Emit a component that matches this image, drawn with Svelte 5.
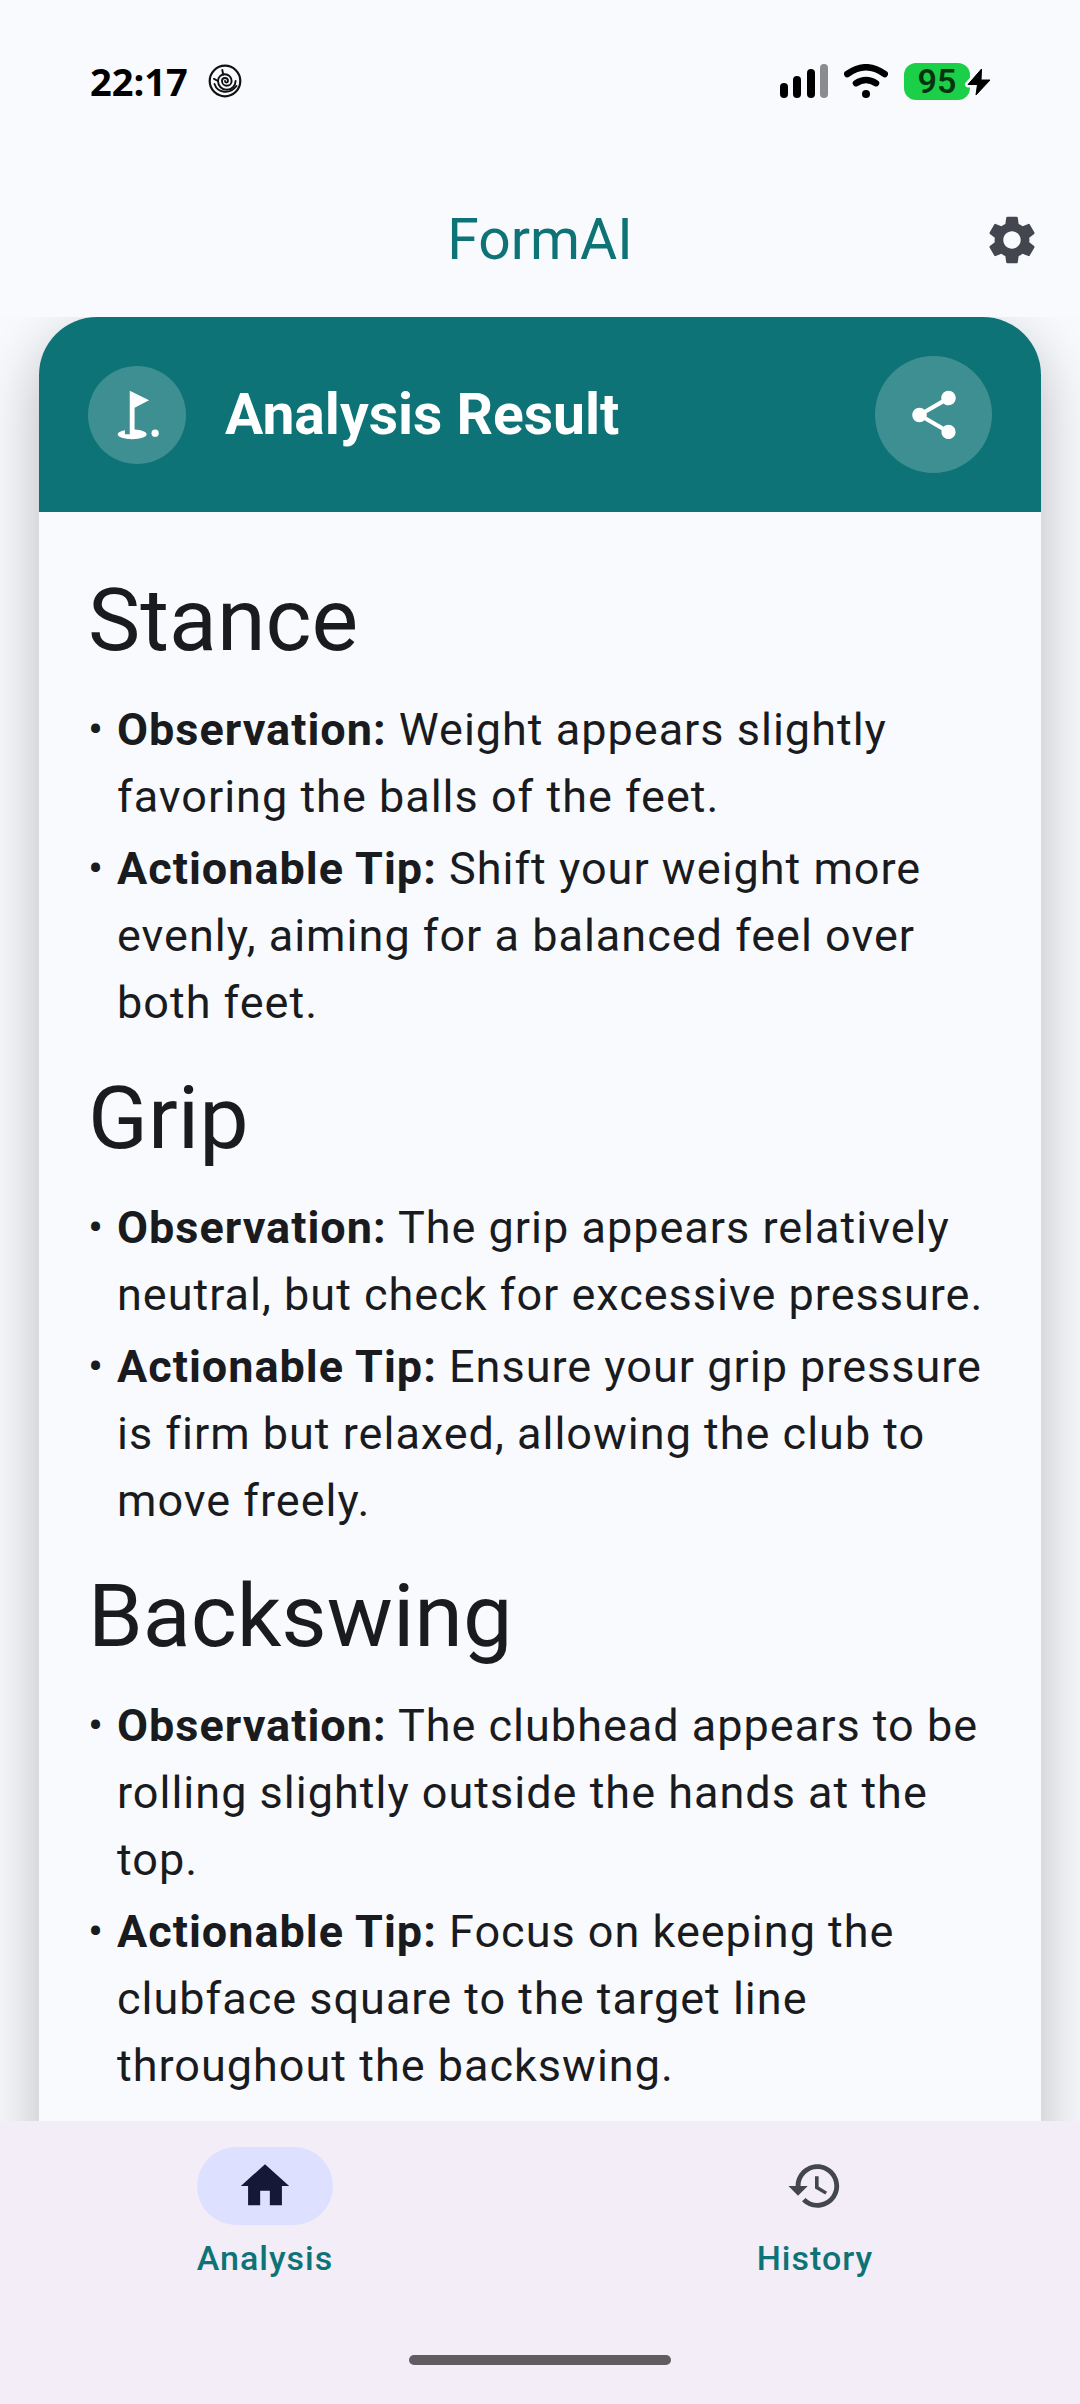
<script lang="ts">
  type Point = { label: string; text: string };
  type Section = { title: string; points: Point[] };

  const sections: Section[] = [
    {
      title: "Stance",
      points: [
        {
          label: "Observation:",
          text: "Weight appears slightly favoring the balls of the feet.",
        },
        {
          label: "Actionable Tip:",
          text: "Shift your weight more evenly, aiming for a balanced feel over both feet.",
        },
      ],
    },
    {
      title: "Grip",
      points: [
        {
          label: "Observation:",
          text: "The grip appears relatively neutral, but check for excessive pressure.",
        },
        {
          label: "Actionable Tip:",
          text: "Ensure your grip pressure is firm but relaxed, allowing the club to move freely.",
        },
      ],
    },
    {
      title: "Backswing",
      points: [
        {
          label: "Observation:",
          text: "The clubhead appears to be rolling slightly outside the hands at the top.",
        },
        {
          label: "Actionable Tip:",
          text: "Focus on keeping the clubface square to the target line throughout the backswing.",
        },
      ],
    },
  ];

  const tabs = [
    {
      id: "analysis",
      label: "Analysis",
      icon: "M10 20v-6h4v6h5v-8h3L12 3 2 12h3v8z",
    },
    {
      id: "history",
      label: "History",
      icon: "M13 3c-4.97 0-9 4.03-9 9H1l3.89 3.89.07.14L9 12H6c0-3.87 3.13-7 7-7s7 3.13 7 7-3.13 7-7 7c-1.93 0-3.68-.79-4.94-2.06l-1.42 1.42C8.27 19.99 10.51 21 13 21c4.97 0 9-4.03 9-9s-4.03-9-9-9zm-1 5v5l4.28 2.54.72-1.21-3.5-2.08V8H12z",
    },
  ];

  let active = $state("analysis");
</script>

<div class="screen">
  <div class="status">
    <div class="group">
      <span class="clock">22:17</span>
      <svg class="spiral" viewBox="0 0 34 34" fill="none" stroke="#111" stroke-linecap="round">
        <circle cx="17" cy="17" r="15.3" stroke-width="2.2" />
        <path
          stroke-width="1.9"
          d="M17 17a1.5 1.5 0 0 0 3 0a3 3 0 0 0-6 0a4.8 4.8 0 0 0 9.6 0a6.8 6.8 0 0 0-13.6 0a8.8 8.800 0 0 0 17.6 0"
        />
        <path stroke-width="1.9" d="M6 14.800l4 2.200M14.300 6l.9 4.500M6.500 20c3 9 15 11 22 2" />
      </svg>
    </div>
    <div class="group">
      <svg class="signal" viewBox="0 0 48 34">
        <rect x="0" y="19" width="8" height="15" rx="4" />
        <rect x="13" y="12" width="8" height="22" rx="4" />
        <rect x="27" y="5" width="8" height="29" rx="4" />
        <rect x="40" y="0" width="8" height="34" rx="4" fill="#8a8b8e" />
      </svg>
      <svg class="wifi" viewBox="0 0 44 34" fill="none" stroke="#000" stroke-linecap="round">
        <path stroke-width="6.5" d="M3.3 10Q22-3.500 40.700 10" />
        <path stroke-width="6.5" d="M12 19.200Q22 12.800 32 19.200" />
        <circle cx="22" cy="30" r="4" fill="#000" stroke="none" />
      </svg>
      <div class="battery">
        <span class="level">95</span>
        <svg class="bolt" viewBox="0 0 28 34">
          <path
            d="M17.500 4L4 19.500h9.500L12 30 26 15h-9z"
            stroke="#f8fafd"
            stroke-width="6"
            stroke-linejoin="round"
          />
          <path d="M17.500 4L4 19.500h9.500L12 30 26 15h-9z" stroke="#000" stroke-linejoin="round" />
        </svg>
      </div>
    </div>
  </div>

  <header class="appbar">
    <h1>FormAI</h1>
    <button class="settings" aria-label="Settings">
      <svg class="icon" viewBox="0 0 24 24">
        <path
          d="M19.14 12.94c.04-.3.06-.61.06-.94 0-.32-.02-.64-.07-.94l2.030-1.580c.18-.14.23-.41.12-.61l-1.920-3.320c-.12-.22-.37-.29-.59-.22l-2.390.96c-.5-.38-1.030-.7-1.620-.94l-.36-2.540c-.04-.24-.24-.41-.48-.41h-3.840c-.24 0-.43.17-.47.41l-.36 2.540c-.59.24-1.130.57-1.620.94l-2.390-.96c-.22-.08-.47 0-.59.22L2.740 8.870c-.12.21-.08.47.12.61l2.030 1.580c-.05.3-.09.63-.09.94s.02.64.07.94l-2.030 1.580c-.18.14-.23.41-.12.61l1.920 3.320c.12.22.37.29.59.22l2.390-.96c.5.38 1.030.7 1.620.94l.36 2.540c.05.24.24.41.48.41h3.840c.24 0 .44-.17.47-.41l.36-2.540c.59-.24 1.130-.56 1.620-.94l2.390.96c.22.08.47 0 .59-.22l1.920-3.320c.12-.22.07-.47-.12-.61l-2.010-1.580zM12 15.600c-1.980 0-3.600-1.620-3.600-3.600s1.620-3.600 3.600-3.600 3.600 1.620 3.600 3.600-1.620 3.600-3.600 3.600z"
        />
      </svg>
    </button>
  </header>

  <main>
    <article class="card">
      <div class="card-header">
        <span class="badge">
          <svg class="icon" viewBox="0 0 24 24">
            <circle cx="19.5" cy="19.5" r="1.5" />
            <path
              d="M17 5.920L9 2v18H7v-1.730c-1.790.35-3 .99-3 1.730 0 1.100 2.690 2 6 2s6-.9 6-2c0-.99-2.160-1.810-5-1.970V8.980l6-3.060z"
            />
          </svg>
        </span>
        <h2>Analysis Result</h2>
        <button class="share" aria-label="Share">
          <svg class="icon" viewBox="0 0 24 24">
            <path
              d="M18 16.080c-.76 0-1.440.3-1.960.77L8.910 12.700c.05-.23.09-.46.09-.7s-.04-.47-.09-.7l7.050-4.110c.54.5 1.250.81 2.040.81 1.660 0 3-1.340 3-3s-1.340-3-3-3-3 1.340-3 3c0 .24.04.47.09.7L8.040 9.810C7.500 9.310 6.790 9 6 9c-1.660 0-3 1.340-3 3s1.340 3 3 3c.79 0 1.500-.31 2.040-.81l7.120 4.160c-.05.21-.08.43-.08.65 0 1.610 1.310 2.920 2.920 2.920s2.920-1.310 2.920-2.920-1.310-2.920-2.920-2.920z"
            />
          </svg>
        </button>
      </div>

      <div class="content">
        {#each sections as section}
          <section>
            <h3>{section.title}</h3>
            <ul>
              {#each section.points as point}
                <li><p><strong>{point.label}</strong> {point.text}</p></li>
              {/each}
            </ul>
          </section>
        {/each}
      </div>
    </article>
  </main>

  <footer>
    <nav>
      {#each tabs as tab}
        <button
          class="tab"
          class:active={active === tab.id}
          onclick={() => (active = tab.id)}
        >
          <span class="pill">
            <svg class="icon" viewBox="0 0 24 24"><path d={tab.icon} /></svg>
          </span>
          {tab.label}
        </button>
      {/each}
    </nav>
    <div class="handle"></div>
  </footer>
</div>

<style>
  :global(body) {
    margin: 0;
    background: #f8fafd;
  }

  .screen {
    display: flex;
    flex-direction: column;
    height: 100vh;

    background: #f8fafd;
    color: #1a1b1e;
    font-family: Roboto, "Open Sans", sans-serif;
  }

  h1,
  h2,
  h3,
  p,
  ul {
    margin: 0;
    padding: 0;
  }

  button {
    display: flex;
    justify-content: center;
    align-items: center;
    padding: 0;
    border: none;
    background: transparent;

    font-family: inherit;
    cursor: pointer;
  }

  .icon {
    display: block;
    width: 58px;
    height: 58px;
    fill: currentColor;
  }

  .status {
    display: flex;
    justify-content: space-between;
    align-items: center;
    height: 162px;
    padding: 0 90px;
    flex-shrink: 0;
  }

  .group {
    display: flex;
    align-items: center;
    gap: 16px;
  }

  .clock {
    margin-right: 4px;
    color: #000;
    font-family: "Open Sans", sans-serif;
    font-size: 38px;
    font-weight: 700;
    line-height: 46px;
  }

  .spiral {
    width: 34px;
    height: 34px;
  }

  .signal {
    width: 48px;
    height: 34px;
  }

  .wifi {
    width: 44px;
    height: 34px;
  }

  .battery {
    position: relative;
    width: 86px;
  }

  .level {
    display: block;
    width: 66px;
    border-radius: 12px;
    background: #1bcf49;

    color: #06330f;
    font-size: 34px;
    font-weight: 600;
    line-height: 37px;
    text-align: center;
  }

  .bolt {
    position: absolute;
    top: 2px;
    right: -2px;
    width: 28px;
    height: 34px;
  }

  .appbar {
    display: grid;
    grid-template-columns: 1fr auto 1fr;
    align-items: center;
    height: 155px;
    padding: 0 39px;
    flex-shrink: 0;
  }

  h1 {
    grid-column: 2;
    color: #0e7376;
    font-size: 57px;
    font-weight: 400;
    line-height: 66px;
  }

  .settings {
    justify-self: end;
    color: #44464f;
  }

  main {
    flex: 1;
    min-height: 0;
    padding: 0 39px;
    overflow-y: auto;
    scrollbar-width: none;
  }

  .card {
    border-radius: 58px;
    background: #f8fafd;
    box-shadow: 0 20px 64px rgba(0, 0, 0, 0.26);
  }

  .card-header {
    display: flex;
    align-items: center;
    gap: 39px;
    padding: 39px 49px;
    border-radius: 58px 58px 0 0;
    background: #0e7376;
    color: #fff;
  }

  .badge,
  .share {
    display: flex;
    justify-content: center;
    align-items: center;
    border-radius: 50%;
    background: rgba(255, 255, 255, 0.2);
    color: #fff;
  }

  .badge {
    width: 98px;
    height: 98px;
  }

  .share {
    width: 117px;
    height: 117px;
  }

  h2 {
    flex: 1;
    font-size: 57px;
    font-weight: 700;
    line-height: 66px;
  }

  .content {
    display: flex;
    flex-direction: column;
    gap: 33px;
    padding: 59px 49px 96px;
  }

  h3 {
    margin-bottom: 27px;
    font-size: 88px;
    font-weight: 400;
    line-height: 98px;
  }

  ul {
    display: grid;
    gap: 5px;
    list-style: none;
  }

  li {
    display: grid;
    grid-template-columns: 29px 1fr;

    font-size: 45px;
    line-height: 67px;
    letter-spacing: 1px;
  }

  li::before {
    content: "•";
  }

  footer {
    display: flex;
    flex-direction: column;
    align-items: center;
    flex-shrink: 0;
    gap: 74px;
    padding: 26px 0 39px;
    background: #f3edf7;
  }

  nav {
    display: grid;
    grid-template-columns: 1fr 1fr;
    gap: 20px;
    width: 100%;
  }

  .tab {
    flex-direction: column;
    gap: 10px;

    color: #0e7376;
    font-size: 34px;
    font-weight: 500;
    line-height: 46px;
    letter-spacing: 1px;
  }

  .pill {
    display: flex;
    justify-content: center;
    padding: 10px 39px;
    border-radius: 40px;
    color: #44464f;
  }

  .active .pill {
    background: #dde1ff;
    color: #151937;
  }

  .handle {
    width: 262px;
    height: 10px;
    border-radius: 5px;
    background: #605d62;
  }
</style>
